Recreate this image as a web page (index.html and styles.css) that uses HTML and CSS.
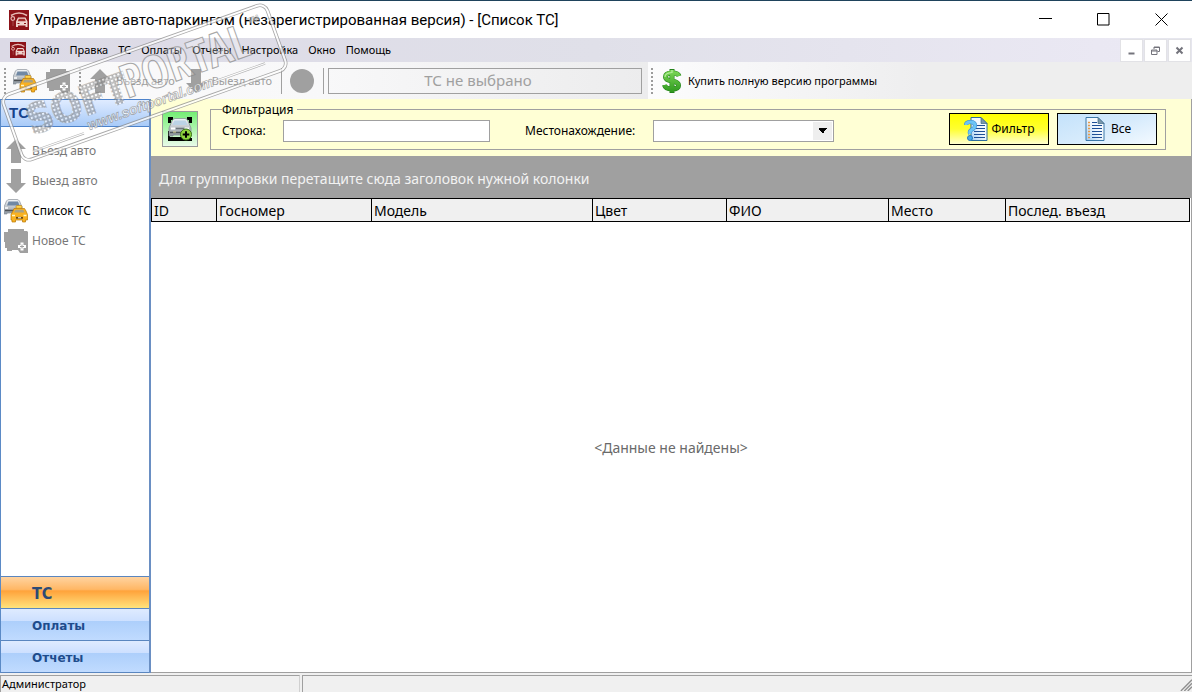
FILE: index.html
```html
<!DOCTYPE html>
<html lang="ru">
<head>
<meta charset="utf-8">
<title>Управление авто-паркингом</title>
<link rel="stylesheet" href="styles.css">
</head>
<body>
<svg class="defs" aria-hidden="true">
  <defs>
    <linearGradient id="silver" x1="0" y1="0" x2="0" y2="1"><stop offset="0" stop-color="#f4f7fa"/><stop offset="1" stop-color="#8d959e"/></linearGradient>
    <linearGradient id="green" x1="0" y1="0" x2="0" y2="1"><stop offset="0" stop-color="#7ed957"/><stop offset="1" stop-color="#2f9a1f"/></linearGradient>
    <linearGradient id="sheet" x1="1" y1="0" x2="0" y2="1"><stop offset="0" stop-color="#fff"/><stop offset=".5" stop-color="#eef6fd"/><stop offset="1" stop-color="#9fcaf0"/></linearGradient>
    <pattern id="tiles" width="4" height="4" patternUnits="userSpaceOnUse"><rect x=".4" y=".4" width="3.4" height="3.4" rx="1" fill="#fff" fill-opacity=".65" stroke="#6e6e6e" stroke-width=".8"/></pattern>
  </defs>
  <symbol id="i-app" viewBox="0 0 20 20">
    <rect width="20" height="20" fill="#8c1218"/>
    <path d="M2 5.500 Q10 .5 18 5.500" fill="none" stroke="#e6b9b4" stroke-width="1.500"/>
    <circle cx="3.800" cy="8.500" r="1.800" fill="none" stroke="#e6b9b4" stroke-width="1.200"/><path d="M4 11v5" stroke="#a54b4b" stroke-width="1"/>
    <path d="M7 11.500 9 7.500h7.500l2 4v5.500h-2v-1.500H9V17H7z" fill="#f0d5cf"/><path d="M9.800 8.800h6l1 2.400H8.800z" fill="#a02a2a"/><path d="M8.500 13.500h2M15 13.500h2" stroke="#8c1218"/>
  </symbol>
  <symbol id="i-cars" viewBox="0 0 24 24">
    <path d="M0 8 2.500 2Q3.500 .5 5 .5h8q1.500 0 2.500 1.500L18 8v7h-3v-1H3v1H0z" fill="url(#silver)" stroke="#8b929b" stroke-width=".7"/>
    <path d="M3 6.500 4.500 2.500h9.500L15.500 6.500z" fill="#7088a4"/><path d="M1 11.500h15" stroke="#4e5256" stroke-width="1.500"/><path d="M1 9h3M13 9h3" stroke="#fff" stroke-width="1.500"/>
    <path d="M7 15.500 9 12l1-2.500h10.500l1.500 2.500 1.500 3.500V21h-2v2h-3v-2h-7v2H8v-2H7z" fill="#f9b120" stroke="#b97906" stroke-width=".7"/>
    <rect x="12" y="6.500" width="6" height="2.800" rx="1" fill="#ffd44c" stroke="#b97906" stroke-width=".6"/>
    <path d="M10 13.500 11.300 10.800h8L20.500 13.500z" fill="#a8a287"/><path d="M8 16.500h3M19.500 16.500h3" stroke="#fff6c4" stroke-width="1.600"/><path d="M12 18.800h7" stroke="#6b4b15" stroke-width="1.800"/><path d="M14 18.800h3" stroke="#fff"/>
  </symbol>
  <symbol id="i-newgrey" viewBox="0 0 24 24">
    <path d="M4 0h16v2h3l1 1v21h-8l-2-3H8v1H3v-3H1v-6H0V3h4z" fill="#a0a0a0"/>
    <path d="M18 13.500v8M14 17.500h8" stroke="#fff" stroke-width="3"/><path d="M18 15.500v4M16 17.500h4" stroke="#a0a0a0"/>
  </symbol>
  <symbol id="i-up" viewBox="0 0 20 24"><path d="M10 0 20 10h-5v14H5V10H0z" fill="#a0a0a0"/></symbol>
  <symbol id="i-down" viewBox="0 0 20 24"><path d="M10 24 20 14h-5V0H5v14H0z" fill="#a0a0a0"/></symbol>
  <symbol id="i-addcar" viewBox="0 0 24 24">
    <path d="M0 0h5v3H3v3H0zM24 0h-5v3h2v3h3zM0 24V14h2v6h12v4zM14 24v-3h10v3z" fill="#000"/>
    <path d="M1 11 4 4Q5 1.500 7 1.500h10q2 0 3 2.500l3 7v8h-4v-1H5v1H1z" fill="url(#silver)" stroke="#7c858d" stroke-width=".7"/>
    <path d="M4.500 8 6.500 3.500h11L19.500 8z" fill="#bcd3e6"/><path d="M3 11.500h4M17 11.500h4" stroke="#fff" stroke-width="2"/><path d="M8 11.500h8" stroke="#6d757a" stroke-width="1.500"/><path d="M2 15.500h11" stroke="#4d5459" stroke-width="1.500"/><path d="M5 15h3" stroke="#e8dfa0"/>
    <circle cx="18" cy="17.500" r="5.500" fill="#8fd43e" stroke="#357312"/><path d="M18 14.200v6.600M14.700 17.500h6.600" stroke="#000" stroke-width="2"/>
  </symbol>
  <symbol id="i-dollar" viewBox="0 0 22 24">
    <path d="M18 7Q17 4 11 4 4.500 4 4.500 8q0 3 6.500 4t6.500 4.500Q17.500 20 11 20 4.500 20 3.500 16M11 0v24" fill="none" stroke="#25831b" stroke-width="5"/>
    <path d="M18 7Q17 4 11 4 4.500 4 4.500 8q0 3 6.500 4t6.500 4.500Q17.500 20 11 20 4.500 20 3.500 16M11 1v22" fill="none" stroke="url(#green)" stroke-width="3.800"/>
    <path d="M4 8q0-4 7-4.500M11 1v3" fill="none" stroke="#b5ee9e" stroke-width="1.200"/>
  </symbol>
  <symbol id="i-sheet" viewBox="0 0 20 24">
    <path d="M1 .5h12l6 6v17H1z" fill="url(#sheet)" stroke="#3c78a8"/><path d="M13 .5v6h6z" fill="#7c98aa" stroke="#3c6888" stroke-width=".7"/>
    <path d="M7 5.500h5M7 8.500h10M7 11.500h10M7 14.500h10M7 17.500h10M7 20.500h10" stroke="#1e4f96"/>
    <path d="M3 5.500h2M3 8.500h2M3 11.500h2M3 14.500h2M3 17.500h2M3 20.500h2" stroke="#e69a4a" stroke-width="1.500"/>
  </symbol>
  <symbol id="i-query" viewBox="0 0 24 24">
    <path d="M7 .5h10l6 6v17H7z" fill="url(#sheet)" stroke="#2d6c9c"/><path d="M17 .5v6h6z" fill="#7c98aa" stroke="#3c6888" stroke-width=".7"/>
    <path d="M11 8.500h10M12 11.500h9M10 14.500h11M10 17.500h11M10 20.500h11" stroke="#1e4f96"/>
    <path d="M2 8Q2 5 6.500 5T11 8.500Q11 11 8 12.500T6 17" fill="none" stroke="#3a8bce" stroke-width="4"/><path d="M2 8Q2 5 6.500 5T11 8.500Q11 11 8 12.500T6 17" fill="none" stroke="#6cc4f5" stroke-width="3"/>
    <circle cx="6" cy="21" r="2.500" fill="#48a9ea" stroke="#2678bd"/>
  </symbol>
</svg>

<div class="window">
  <header class="titlebar">
    <svg class="ic-title"><use href="#i-app"/></svg>
    <h1 class="caption">Управление авто-паркингом (незарегистрированная версия) - [Список ТС]</h1>
    <button class="win-btn" aria-label="Свернуть"><svg viewBox="0 0 13 13"><path d="M0 5.500h13"/></svg></button>
    <button class="win-btn" aria-label="Развернуть"><svg viewBox="0 0 13 13"><path d="M.5 .5h11.500v11.500H.5z"/></svg></button>
    <button class="win-btn" aria-label="Закрыть"><svg viewBox="0 0 13 13"><path d="m.5 .5 12 12m0-12-12 12"/></svg></button>
  </header>

  <nav class="menubar">
    <svg class="ic-menu"><use href="#i-app"/></svg>
    <button class="menu">Файл</button><button class="menu">Правка</button><button class="menu">ТС</button><button class="menu">Оплаты</button><button class="menu">Отчеты</button><button class="menu">Настройка</button><button class="menu">Окно</button><button class="menu">Помощь</button>
    <div class="mdi">
      <button class="mdi-btn" aria-label="Свернуть окно"><svg viewBox="0 0 9 9"><path d="M1.500 7.500h6" stroke-width="2"/></svg></button>
      <button class="mdi-btn" aria-label="Восстановить окно"><svg viewBox="0 0 9 9"><path d="M3 3V1h5.500v4.500H6.500M.5 4h5.500v4.500H.5zM.5 5h5.500M3 1.500h5.500"/></svg></button>
      <button class="mdi-btn" aria-label="Закрыть окно"><svg viewBox="0 0 9 9"><path d="m1.500 1.500 6 6m0-6-6 6" stroke-width="2"/></svg></button>
    </div>
  </nav>

  <div class="toolbar">
    <div class="band band-main">
      <i class="grip"></i>
      <button class="tool" aria-label="Список ТС"><svg class="ic"><use href="#i-cars"/></svg></button>
      <button class="tool" disabled aria-label="Новое ТС"><svg class="ic"><use href="#i-newgrey"/></svg></button>
      <i class="grip"></i>
      <button class="tool" disabled><svg class="ic"><use href="#i-up"/></svg>Въезд авто</button>
      <button class="tool" disabled><svg class="ic"><use href="#i-down"/></svg>Выезд авто</button>
      <i class="sep"></i>
      <button class="tool" disabled aria-label="Состояние"><span class="dot"></span></button>
      <i class="sep sep-last"></i>
      <button class="status-pick" disabled>ТС не выбрано</button>
    </div>
    <div class="band band-buy">
      <i class="grip"></i>
      <button class="tool buy"><svg class="ic"><use href="#i-dollar"/></svg>Купить полную версию программы</button>
    </div>
  </div>

  <div class="body">
    <aside class="sidebar">
      <h2 class="side-head">ТС</h2>
      <div class="side-list">
        <button class="side-item" disabled><svg class="ic"><use href="#i-up"/></svg>Въезд авто</button>
        <button class="side-item" disabled><svg class="ic"><use href="#i-down"/></svg>Выезд авто</button>
        <button class="side-item"><svg class="ic"><use href="#i-cars"/></svg>Список ТС</button>
        <button class="side-item" disabled><svg class="ic"><use href="#i-newgrey"/></svg>Новое ТС</button>
      </div>
      <button class="section active">ТС</button>
      <button class="section">Оплаты</button>
      <button class="section">Отчеты</button>
    </aside>

    <main class="main">
      <div class="filterbar">
        <button class="add" aria-label="Добавить ТС"><svg class="ic-add"><use href="#i-addcar"/></svg></button>
        <fieldset class="filter">
          <legend>Фильтрация</legend>
          <label class="lbl lbl-line" for="line">Строка:</label>
          <input class="field field-line" id="line" type="text">
          <label class="lbl lbl-place" for="place">Местонахождение:</label>
          <select class="field field-place" id="place"><option></option></select>
          <div class="actions">
            <button class="act act-filter"><svg class="ic"><use href="#i-query"/></svg>Фильтр</button>
            <button class="act act-all"><svg class="ic"><use href="#i-sheet"/></svg>Все</button>
          </div>
        </fieldset>
      </div>
      <div class="groupbar">Для группировки перетащите сюда заголовок нужной колонки</div>
      <table class="grid">
        <colgroup><col class="c-id"><col class="c-num"><col class="c-model"><col class="c-color"><col class="c-name"><col class="c-place"><col></colgroup>
        <thead><tr><th>ID</th><th>Госномер</th><th>Модель</th><th>Цвет</th><th>ФИО</th><th>Место</th><th>Послед. въезд</th></tr></thead>
      </table>
      <div class="empty">&lt;Данные не найдены&gt;</div>
    </main>
  </div>

  <footer class="statusbar">
    <div class="pane pane-user">Администратор</div>
    <div class="pane pane-rest"></div>
    <svg class="resize" viewBox="0 0 14 14"><path d="M1 14 14 1M5 14l9-9M9 14l5-5" stroke="#8f8f8f" stroke-width="1.600"/></svg>
  </footer>
</div>

<svg class="watermark" viewBox="0 0 300 170" aria-hidden="true">
  <g transform="translate(1 97) rotate(-19.600)">
    <g fill="none">
      <rect x="0" y="0" width="280" height="69" rx="8" stroke="#8c8c8c" stroke-width="3.600"/>
      <rect x="0" y="0" width="280" height="69" rx="8" stroke="#fff" stroke-width="2"/>
      <path d="M12 62h54M206 57h54" stroke="#999" stroke-width="2.400"/><path d="M12 62h54M206 57h54" stroke="#fff" stroke-width="1.200"/>
    </g>
    <text class="wm-tiles" x="17" y="46">SOFT</text>
    <text class="wm-line" x="118" y="44">PORTAL</text>
    <text class="wm-url" x="72" y="61">www.softportal.com</text>
    <text class="wm-tm" x="258" y="14">TM</text>
  </g>
</svg>
</body>
</html>
```
FILE: styles.css
```css
* { box-sizing: border-box; }
html, body { height: 100%; margin: 0; }
body { font: 12px/16px "Noto Sans", "Open Sans", sans-serif; color: #000; background: #f0f0f0; overflow: hidden; }
button { font: inherit; color: inherit; margin: 0; padding: 0; border: 0; background: none; display: flex; align-items: center; white-space: nowrap; }
h1, h2 { margin: 0; }
.defs { display: block; width: 0; height: 0; }
.window { display: flex; flex-direction: column; height: 100vh; border-top: 1px solid #1f435c; }
.ic { width: 24px; height: 24px; flex: none; }

.titlebar { display: flex; align-items: center; height: 37px; padding: 0 2px 0 9px; background: #fff; flex: none; }
.ic-title { width: 20px; height: 20px; margin-right: 5px; }
.caption { flex: 1; font: 400 15px/20px Roboto, "Open Sans", sans-serif; }
.win-btn { width: 58px; height: 37px; justify-content: center; }
.win-btn svg { width: 13px; height: 13px; fill: none; stroke: #000; }

.menubar { display: flex; align-items: center; height: 24px; padding-left: 10px; flex: none; background: linear-gradient(90deg, #dcdae6, #e0e0e9 50%, #eae8f3 92%, #ebe9f4); font-size: 11px; }
.ic-menu { width: 16px; height: 16px; margin-right: 5px; }
.menu { margin-right: 10px; }
.mdi { display: flex; gap: 1px; margin-left: auto; align-self: stretch; background: #e6e6ee; padding: 1px 1px 0 0; }
.mdi-btn { width: 23px; height: 23px; justify-content: center; background: #fff; border: 1px solid #e2e2e6; }
.mdi-btn svg { width: 9px; height: 9px; fill: none; stroke: #74747c; }

.toolbar { display: flex; height: 37px; flex: none; background: #eeeeee; font-size: 11px; }
.band { display: flex; align-items: center; background: linear-gradient(90deg, #fcfcfd, #eeeeef); }
.band-main { width: 648px; padding-left: 4px; background: linear-gradient(90deg, #fafafb, #f8f8f9 50%, #ececed); }
.band-buy { padding: 0 43px 0 3px; }
.grip { width: 2px; height: 26px; margin-right: 7px; background: repeating-linear-gradient(#9c9c9c 0 2px, transparent 2px 4px); }
.tool { margin-right: 9px; gap: 4px; }
.tool:disabled { color: #a0a0a0; }
.sep { width: 1px; height: 26px; margin-right: 8px; background: #a0a0a0; }
.sep-last { margin-right: 4px; }
.dot { width: 24px; height: 24px; border-radius: 50%; background: #a0a0a0; }
.status-pick { flex: 1; height: 26px; margin-right: 6px; padding: 0 14px 2px 0; justify-content: center; border: 1px solid #a0a0a0; font-size: 15px; color: #a0a0a0; }
.buy { margin: 0; }

.body { flex: 1; display: flex; min-height: 0; }
.sidebar { width: 151px; flex: none; display: flex; flex-direction: column; background: #fff; border-left: 1px solid #5b8ac6; border-right: 2px solid #6a8fc3; }
.side-head { height: 28px; padding-left: 8px; font: 700 15px/25px "Liberation Sans", sans-serif; color: #15428b; border-top: 1px solid #4d83cb; border-bottom: 1px solid #4d83cb; background: linear-gradient(#dfebff, #a9cbf8); }
.side-list { flex: 1; padding-top: 9px; }
.side-item { width: 100%; height: 30px; padding-left: 3px; gap: 4px; text-align: left; }
.side-item:disabled { color: #787878; }
.section { height: 32px; padding: 2px 0 0 31px; flex: none; border-top: 1px solid #5a86bf; font: 700 12px/16px "DejaVu Sans", sans-serif; color: #1e4c8c; background: linear-gradient(#dfebff, #cde0ff 38%, #adcffb 40%, #c0dbff); }
.section:last-child { height: 33px; border-bottom: 1px solid #5a86bf; }
.section.active { font: 700 16px/20px "DejaVu Sans Condensed", "Noto Sans", sans-serif; color: #2d4a75; background: linear-gradient(#ffd3a0, #ffb765 40%, #ffa33b 45%, #ffc560 75%, #ffe37b); }

.main { flex: 1; min-width: 0; display: flex; flex-direction: column; background: #fff; border-right: 1px solid #a0a0a0; border-bottom: 1px solid #a0a0a0; }
.filterbar { display: flex; align-items: center; height: 57px; flex: none; padding: 3px 25px 0 11px; background: #ffffd5; }
.add { width: 36px; height: 36px; justify-content: center; border: 1px solid #9a9a9a; background: linear-gradient(#74ee74, #e9fbe9); }
.ic-add { width: 24px; height: 24px; }
.filter { flex: 1; min-width: 0; display: flex; align-items: center; height: 42px; margin: 0 0 0 12px; padding: 2px 8px 0 11px; border: 1px solid #a0a0a0; }
.filter legend { height: 2px; line-height: 4px; padding: 0 4px 0 0; font-size: 12px; }
.lbl { flex: none; }
.lbl-line { width: 61px; }
.lbl-place { width: 128px; margin-left: 35px; }
.field { height: 22px; border: 1px solid #a0a0a0; border-radius: 0; background: #fff; font: inherit; padding: 0 4px; }
.field-line { width: 207px; }
.field-place { width: 181px; appearance: none; background: linear-gradient(to top right, transparent 50%, #000 50%) right 10px center / 5px 5px no-repeat, linear-gradient(to top left, transparent 50%, #000 50%) right 5px center / 5px 5px no-repeat, linear-gradient(#eee, #eee) right 1px center / 19px 18px no-repeat, #fff; }
.actions { display: flex; gap: 8px; margin-left: auto; align-self: flex-start; padding-top: 1px; }
.act { width: 100px; height: 32px; justify-content: center; gap: 4px; border: 1px solid #000; }
.act-filter { background: linear-gradient(#ffff00, #ffff30 50%, #ffffd0); }
.act-all { background: linear-gradient(160deg, #c4e2fb, #d6ebfc 50%, #f4faff); }
.groupbar { height: 42px; flex: none; padding: 3px 8px 0; font-size: 14px; line-height: 40px; color: #f2f2f2; background: #a0a0a0; }
.grid { width: calc(100% - 1px); table-layout: fixed; border-collapse: collapse; flex: none; }
.grid th { height: 23px; padding: 2px 2px 0; border: 1px solid #000; background: #f0f0f0; font-weight: 400; font-size: 14px; line-height: 20px; text-align: left; white-space: nowrap; }
.c-id { width: 65px; } .c-num { width: 155px; } .c-model { width: 221px; } .c-color { width: 134px; } .c-name { width: 162px; } .c-place { width: 117px; }
.empty { flex: 1; display: flex; align-items: center; justify-content: center; padding-top: 2px; font-size: 14px; color: #6a6a6a; }

.statusbar { display: flex; gap: 2px; height: 19px; padding-top: 2px; flex: none; font-size: 11px; background: #f0f0f0; position: relative; }
.pane { border-top: 1px solid #a0a0a0; border-left: 1px solid #a0a0a0; padding-left: 1px; }
.pane-user { width: 300px; border-right: 1px solid #d0d0d0; }
.pane-rest { flex: 1; }
.resize { position: absolute; right: 0; bottom: 1px; width: 12px; height: 12px; }

.watermark { position: absolute; left: 0; top: 0; width: 300px; height: 170px; pointer-events: none; opacity: .75; }
.wm-tiles { font: 700 40px "DejaVu Sans Condensed", sans-serif; fill: url(#tiles); stroke: url(#tiles); stroke-width: 2; }
.wm-line { font: 700 46px "Open Sans Condensed", "Liberation Sans Narrow", sans-serif; fill: #fff; fill-opacity: .4; stroke: #8c8c8c; stroke-width: 1; }
.wm-url { font: italic 700 14px "Liberation Sans", sans-serif; fill: #fff; stroke: #8c8c8c; stroke-width: .7; }
.wm-tm { font: 700 8px "Liberation Sans", sans-serif; fill: #fff; stroke: #999; stroke-width: .5; }
```
